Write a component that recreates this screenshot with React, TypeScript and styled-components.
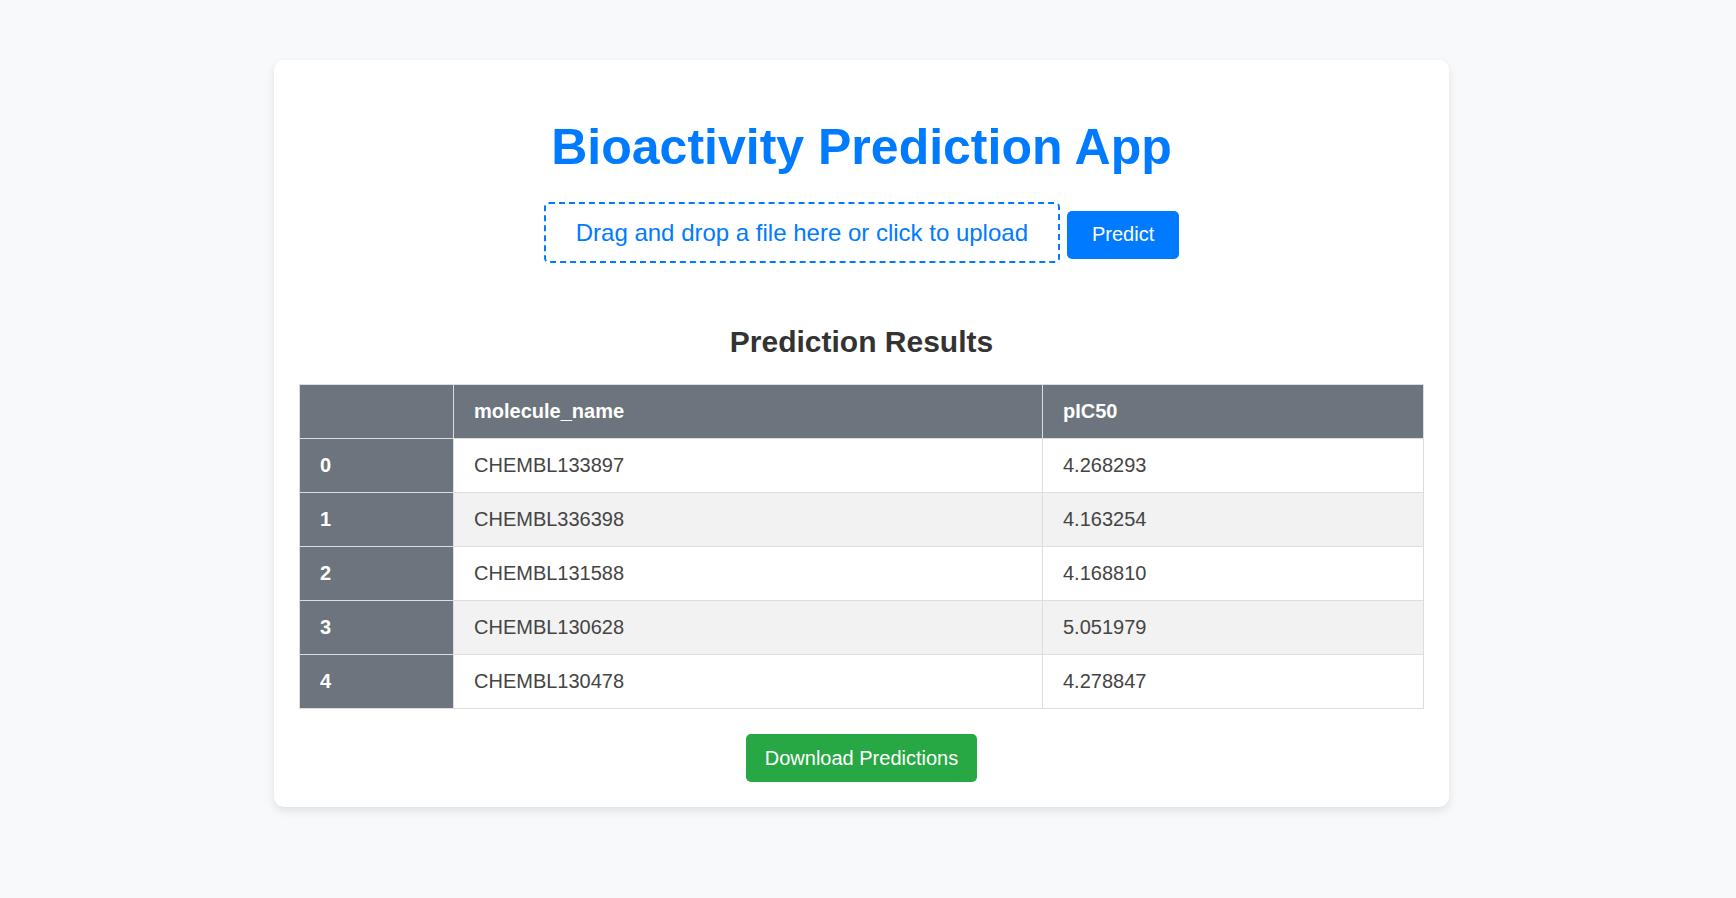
import React from 'react';
import styled, { createGlobalStyle } from 'styled-components';

const GlobalStyle = createGlobalStyle`
  html, body {
    margin: 0;
    padding: 0;
    background: #f8f9fa;
    font-family: 'Liberation Sans', Arial, sans-serif;
  }
`;

const Page = styled.div`
  padding: 60px 13px 60px 0;
`;

const Card = styled.div`
  width: 1175px;
  box-sizing: border-box;
  margin: 0 auto;
  padding: 25px;
  background: #fff;
  border-radius: 10px;
  box-shadow: 0 4px 10px rgba(0, 0, 0, 0.1);
  text-align: center;
`;

const Title = styled.h1`
  margin: 33px 0 26px;
  font-size: 50px;
  font-weight: 700;
  color: #007bff;
`;

const UploadRow = styled.div`
  display: flex;
  justify-content: center;
  align-items: baseline;
  gap: 7px;
`;

const DropZone = styled.div`
  border: 2px dashed #007bff;
  border-radius: 5px;
  padding: 15px 30px;
  font-size: 24px;
  line-height: 27px;
  color: #007bff;
  cursor: pointer;
`;

const Button = styled.button<{ variant?: 'primary' | 'success' }>`
  border: none;
  border-radius: 5px;
  padding: 12.5px 18.75px;
  font-family: inherit;
  font-size: 20px;
  line-height: 23px;
  color: #fff;
  background: ${props => (props.variant === 'success' ? '#28a745' : '#007bff')};
  cursor: pointer;
`;

const PredictButton = styled(Button)`
  padding: 12.5px 25px;
`;

const Results = styled.section`
  margin-top: 62px;
`;

const ResultsTitle = styled.h2`
  margin: 0 0 25px;
  font-size: 30px;
  font-weight: 700;
  color: #333;
`;

const Table = styled.table`
  width: 100%;
  border-collapse: collapse;
  table-layout: fixed;
  font-size: 20px;
  line-height: 23px;
  text-align: left;
  border: 1px solid #ddd;
`;

const HeadCell = styled.th`
  padding: 15px 20px;
  background: #6c757d;
  color: #fff;
  font-weight: 700;
  border: 1px solid #ddd;
`;

const Row = styled.tr<{ striped?: boolean }>`
  background: ${props => (props.striped ? '#f2f2f2' : '#fff')};
`;

const Cell = styled.td`
  padding: 15px 20px;
  color: #444;
  border: 1px solid #ddd;
`;

const Footer = styled.div`
  margin-top: 25px;
`;

const predictions = [
  { molecule: 'CHEMBL133897', pic50: '4.268293' },
  { molecule: 'CHEMBL336398', pic50: '4.163254' },
  { molecule: 'CHEMBL131588', pic50: '4.168810' },
  { molecule: 'CHEMBL130628', pic50: '5.051979' },
  { molecule: 'CHEMBL130478', pic50: '4.278847' },
];

export default function App() {
  return (
    <Page>
      <GlobalStyle />
      <Card>
        <Title>Bioactivity Prediction App</Title>
        <UploadRow>
          <DropZone>Drag and drop a file here or click to upload</DropZone>
          <PredictButton>Predict</PredictButton>
        </UploadRow>

        <Results>
          <ResultsTitle>Prediction Results</ResultsTitle>
          <Table>
            <colgroup>
              <col style={{ width: 154 }} />
              <col style={{ width: 589 }} />
              <col />
            </colgroup>
            <thead>
              <tr>
                <HeadCell></HeadCell>
                <HeadCell>molecule_name</HeadCell>
                <HeadCell>pIC50</HeadCell>
              </tr>
            </thead>
            <tbody>
              {predictions.map((p, i) => (
                <Row key={p.molecule} striped={i % 2 === 1}>
                  <HeadCell>{i}</HeadCell>
                  <Cell>{p.molecule}</Cell>
                  <Cell>{p.pic50}</Cell>
                </Row>
              ))}
            </tbody>
          </Table>
          <Footer>
            <Button variant="success">Download Predictions</Button>
          </Footer>
        </Results>
      </Card>
    </Page>
  );
}
